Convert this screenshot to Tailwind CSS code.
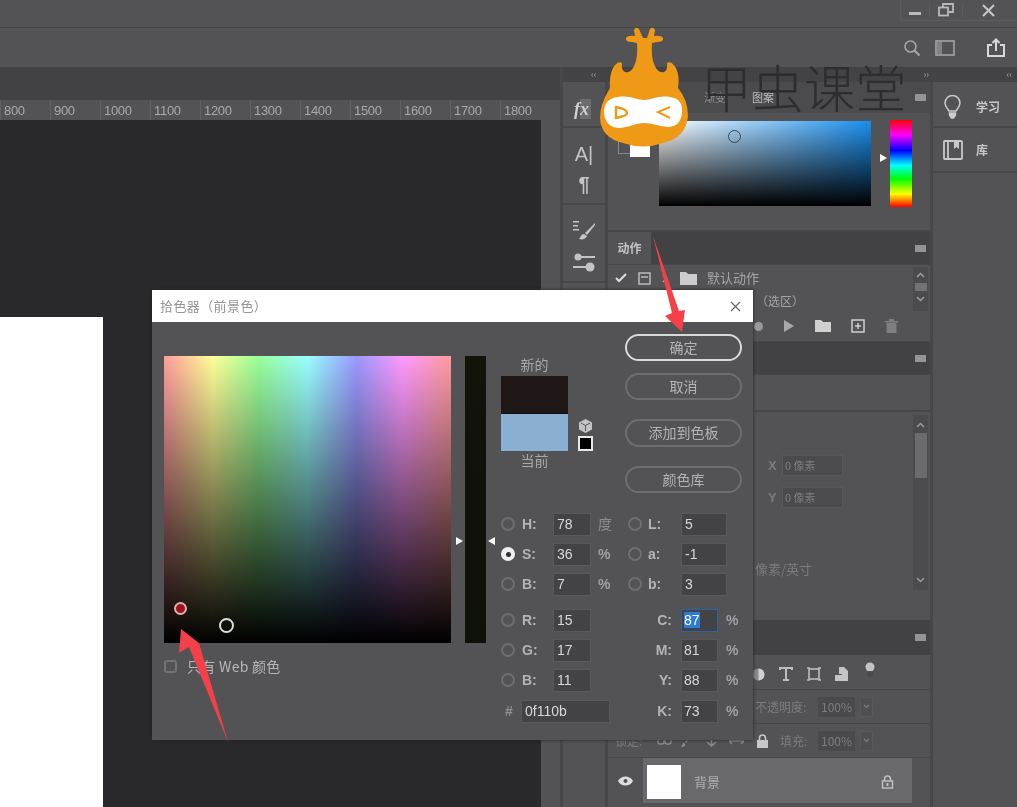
<!doctype html>
<html lang="zh">
<head>
<meta charset="UTF-8" />
<title>拾色器</title>
<script src="https://cdn.jsdelivr.net/npm/@tailwindcss/browser@4"></script>
</head>
<body class="m-0 bg-[#535254]">
<div class="relative w-[1017px] h-[807px] overflow-hidden bg-[#535254] flex flex-col blur-[0.4px] font-['Noto_Sans_CJK_SC','Liberation_Sans',sans-serif] text-[#b0b0b0]">

  <!-- title bar -->
  <header class="h-[28px] shrink-0 border-b border-[#474648] flex justify-end">
    <div class="w-[117px] h-[21px] border-l border-b border-[#5c5b5d] rounded-bl flex items-center text-[#b9b9b9]">
      <div class="w-[28px] flex justify-center"><div class="w-[12px] h-[3px] mt-[6px] bg-[#b9b9b9]"></div></div>
      <div class="w-[33px] flex justify-center border-l border-[#5c5b5d]">
        <svg width="16" height="14" viewBox="0 0 16 14" fill="none" stroke="#b9b9b9" stroke-width="1.8"><rect x="1" y="4.5" width="9" height="8"/><path d="M5 4V1h10v8h-4"/></svg>
      </div>
      <div class="flex-1 flex justify-center pr-[4px] border-l border-[#5c5b5d]">
        <svg width="13" height="13" viewBox="0 0 13 13" stroke="#c4c4c4" stroke-width="2.2"><path d="M1 1l11 11M12 1L1 12"/></svg>
      </div>
    </div>
  </header>

  <!-- options bar -->
  <div class="h-[39px] shrink-0 flex items-center justify-end pr-[11px] gap-[14px]">
    <svg width="18" height="18" viewBox="0 0 18 18" fill="none" stroke="#a5a5a5" stroke-width="1.6"><circle cx="7.5" cy="7.5" r="5.5"/><path d="M11.5 11.5l5 5" stroke-width="2.2"/></svg>
    <svg class="mr-[17px]" width="20" height="16" viewBox="0 0 20 16" fill="none" stroke="#a5a5a5" stroke-width="1.6"><rect x="1" y="1" width="18" height="14"/><rect x="2" y="2" width="5" height="12" fill="#a5a5a5" stroke="none" opacity=".6"/></svg>
    <svg width="20" height="20" viewBox="0 0 20 20" fill="none" stroke="#d8d8d8" stroke-width="2"><path d="M6 7H2v11h16V7h-4"/><path d="M10 13V2M6.5 5L10 1.5 13.5 5"/></svg>
  </div>

  <div class="flex-1 flex min-h-0">
    <!-- document area -->
    <main class="w-[560px] shrink-0 flex flex-col">
      <div class="h-[33px] shrink-0 bg-[#424143] border-t border-[#474648]"></div>
      <div class="h-[20px] shrink-0 flex w-[541px] font-['Liberation_Sans',sans-serif] text-[13px] leading-[22px] tracking-[-0.3px] text-[#a9a9a9]">
        <span class="w-[50px] pl-[3px] border-l border-[#626163]">800</span>
        <span class="w-[50px] pl-[3px] border-l border-[#626163]">900</span>
        <span class="w-[50px] pl-[3px] border-l border-[#626163]">1000</span>
        <span class="w-[50px] pl-[3px] border-l border-[#626163]">1100</span>
        <span class="w-[50px] pl-[3px] border-l border-[#626163]">1200</span>
        <span class="w-[50px] pl-[3px] border-l border-[#626163]">1300</span>
        <span class="w-[50px] pl-[3px] border-l border-[#626163]">1400</span>
        <span class="w-[50px] pl-[3px] border-l border-[#626163]">1500</span>
        <span class="w-[50px] pl-[3px] border-l border-[#626163]">1600</span>
        <span class="w-[50px] pl-[3px] border-l border-[#626163]">1700</span>
        <span class="w-[41px] pl-[3px] border-l border-[#626163]">1800</span>
      </div>
      <div class="flex-1 w-[541px] bg-[#29292b] pt-[197px]">
        <div class="w-[103px] h-full bg-white"></div>
      </div>
    </main>

    <!-- panel docks -->
    <div class="w-[373px] shrink-0 flex flex-col border-l-[3px] border-[#474648]">
      <div class="h-[15px] shrink-0 bg-[#434244] flex items-center justify-between px-[4px] pl-[28px] text-[9px] leading-none text-[#a5a5a5]">
        <span>‹‹</span><span>››</span>
      </div>
      <div class="flex-1 flex min-h-0">
        <!-- icon strip -->
        <div class="w-[45px] shrink-0 border-r-[3px] border-[#474648] flex flex-col items-center text-[#c4c4c4]">
          <div class="h-[46px] w-full border-b-2 border-[#474648] flex items-center pl-[11px] pt-[10px]">
            <span class="bg-[linear-gradient(to_right,transparent_35%,#6d6c6e_35%)] pr-[2px] font-['Liberation_Serif',serif] italic font-bold text-[18px] leading-[20px] text-[#d0d0d0]">fx</span>
          </div>
          <div class="h-[77px] w-full border-b-2 border-[#474648] flex flex-col items-center justify-center gap-[8px] pt-[6px]">
            <span class="font-['Liberation_Sans',sans-serif] text-[20px] leading-[22px]">A|</span>
            <span class="font-['Liberation_Sans',sans-serif] text-[20px] leading-[22px] font-bold">¶</span>
          </div>
          <div class="h-[78px] w-full border-b-2 border-[#474648] flex flex-col items-center justify-center gap-[11px] pt-[6px]">
            <svg width="24" height="22" viewBox="0 0 24 22" fill="#c4c4c4"><path d="M1 1h6v1.500H1zM1 5h5v1.500H1zM1 9h6v1.500H1z"/><path d="M23 3L13 13l2 2L23 5zM12 14c-3 0-3 3-5 5 3 1 7 0 8-3z"/></svg>
            <svg width="24" height="20" viewBox="0 0 24 20" fill="#c4c4c4"><circle cx="6" cy="4" r="3.500"/><path d="M8 3h15v2H8zM1 13h13v2H1z"/><circle cx="18" cy="14" r="4.500"/></svg>
          </div>
        </div>

        <!-- panels -->
        <div class="flex-1 flex flex-col border-r-[3px] border-[#474648]">
          <section class="h-[150px] shrink-0 flex flex-col border-b-2 border-[#474648]">
            <div class="h-[31px] shrink-0 bg-[#4b4a4c] flex items-center text-[11px] text-[#8d8d8d]">
              <span class="ml-[96px]">渐变</span>
              <span class="ml-[26px] text-[#bdbdbd]">图案</span>
              <span class="ml-auto mr-[4px] w-[11px] h-[7px] bg-[#949395]"></span>
            </div>
            <div class="flex-1 relative pl-[51px] pt-[8px] flex items-start">
              <div class="absolute left-[10px] top-[27px] w-[18px] h-[14px] border border-[#8a898b]"></div>
              <div class="absolute left-[22px] top-[30px] w-[20px] h-[14px] bg-white"></div>
              <div class="relative w-[212px] h-[85px] bg-[linear-gradient(to_bottom,transparent,#000),linear-gradient(to_right,#fff,#1a8fee)]">
                <div class="absolute left-[69px] top-[9px] w-[13px] h-[13px] rounded-full border border-[#3a4a5a]"></div>
              </div>
              <div class="w-0 h-0 mt-[33px] ml-[9px] border-y-[4px] border-y-transparent border-l-[7px] border-l-white"></div>
              <div class="w-[22px] h-[87px] ml-[3px] -mt-[1px] bg-[linear-gradient(to_bottom,#f00,#f0f_17%,#00f_35%,#0ff_52%,#0f0_68%,#ff0_85%,#f00)]"></div>
            </div>
          </section>

          <section class="h-[109px] shrink-0 flex flex-col">
            <div class="h-[33px] shrink-0 bg-[#424143] flex items-center border-b border-[#474648]">
              <span class="w-[43px] h-full bg-[#535254] flex items-center justify-center text-[12px] font-bold text-[#c4c4c4]">动作</span>
              <span class="ml-auto mr-[4px] w-[11px] h-[7px] bg-[#949395]"></span>
            </div>
            <div class="flex-1 relative">
              <div class="flex items-center h-[26px] pl-[7px] text-[13px] text-[#a5a5a5]">
                <svg width="12" height="10" viewBox="0 0 12 10" fill="none" stroke="#ddd" stroke-width="2"><path d="M1 5l3 3 7-7"/></svg>
                <svg class="ml-[11px]" width="13" height="13" viewBox="0 0 13 13" fill="none" stroke="#bbb" stroke-width="1.500"><rect x="1" y="1" width="11" height="11"/><path d="M3 5h7"/></svg>
                <svg class="ml-[11px]" width="6" height="9" viewBox="0 0 6 9" fill="none" stroke="#aaa" stroke-width="1.500"><path d="M1 1l3.500 3.500L1 8"/></svg>
                <svg class="ml-[12px]" width="17" height="13" viewBox="0 0 17 13" fill="#ccc"><path d="M0 0h6l2 2h9v11H0z"/></svg>
                <span class="ml-[10px]">默认动作</span>
              </div>
              <div class="h-[20px] pl-[148px] text-[12px] leading-[20px] text-[#a5a5a5]">（选区）</div>
              <div class="flex items-center h-[24px] mt-[3px] pl-[146px] gap-[20px]">
                <span class="w-[9px] h-[9px] rounded-full bg-[#9a9a9a]"></span>
                <svg width="12" height="12" viewBox="0 0 12 12" fill="#a8a8a8"><path d="M1 0l10 6-10 6z"/></svg>
                <svg width="16" height="12" viewBox="0 0 16 12" fill="#d0d0d0"><path d="M0 0h6l2 2h8v10H0z"/></svg>
                <svg width="14" height="14" viewBox="0 0 14 14" fill="none" stroke="#d0d0d0" stroke-width="1.500"><rect x="1" y="1" width="12" height="12"/><path d="M7 4v6M4 7h6"/></svg>
                <svg width="13" height="14" viewBox="0 0 13 14" fill="#7f7f7f"><path d="M0 2h13v1.500H0zM4 0h5v2H4zM1.500 4h10v10h-10z"/></svg>
              </div>
              <div class="absolute right-[2px] top-[2px] w-[15px] h-[44px] bg-[#4b4a4c] flex flex-col items-center text-[#a0a0a0]">
                <svg class="mt-[5px]" width="9" height="6" viewBox="0 0 9 6" fill="none" stroke="currentColor" stroke-width="1.500"><path d="M1 5l3.500-3.500L8 5"/></svg>
                <span class="w-[12px] h-[8px] bg-[#727173] mt-[5px]"></span>
                <svg class="mt-[5px]" width="9" height="6" viewBox="0 0 9 6" fill="none" stroke="currentColor" stroke-width="1.500"><path d="M1 1l3.500 3.500L8 1"/></svg>
              </div>
            </div>
          </section>

          <section class="flex-1 flex flex-col min-h-0">
            <div class="h-[34px] shrink-0 bg-[#424143] flex items-center justify-end border-y border-[#474648]">
              <span class="mr-[4px] w-[11px] h-[7px] bg-[#949395]"></span>
            </div>
            <div class="h-[37px] shrink-0 border-b-2 border-[#474648]"></div>
            <div class="h-[208px] shrink-0 relative text-[#7c7b7d]">
              <div class="flex items-center h-[21px] mt-[43px] pl-[160px] text-[13px] font-bold">
                <span class="w-[14px] font-['Liberation_Sans',sans-serif]">X</span>
                <span class="w-[61px] h-[21px] bg-[#4b4a4c] border border-[#59585a] pl-[2px] text-[11px] leading-[19px] font-normal">0 像素</span>
              </div>
              <div class="flex items-center h-[21px] mt-[11px] pl-[160px] text-[13px] font-bold">
                <span class="w-[14px] font-['Liberation_Sans',sans-serif]">Y</span>
                <span class="w-[61px] h-[21px] bg-[#4b4a4c] border border-[#59585a] pl-[2px] text-[11px] leading-[19px] font-normal">0 像素</span>
              </div>
              <div class="mt-[50px] pl-[147px] text-[13px] leading-[22px]">像素/英寸</div>
              <div class="absolute right-[2px] top-[3px] w-[15px] h-[175px] bg-[#4b4a4c] flex flex-col items-center text-[#9a9a9a]">
                <svg class="mt-[7px]" width="9" height="6" viewBox="0 0 9 6" fill="none" stroke="currentColor" stroke-width="1.500"><path d="M1 5l3.500-3.500L8 5"/></svg>
                <span class="w-[12px] h-[45px] mt-[5px] bg-[#6b6a6c]"></span>
                <svg class="mt-auto mb-[7px]" width="9" height="6" viewBox="0 0 9 6" fill="none" stroke="currentColor" stroke-width="1.500"><path d="M1 1l3.500 3.500L8 1"/></svg>
              </div>
            </div>
            <div class="h-[35px] shrink-0 bg-[#424143] flex items-center justify-end">
              <span class="mr-[4px] w-[11px] h-[7px] bg-[#949395]"></span>
            </div>
            <div class="h-[35px] shrink-0 border-b border-[#474648] flex items-center pl-[144px] pt-[4px] gap-[14px]">
              <svg width="13" height="13" viewBox="0 0 13 13"><circle cx="6.500" cy="6.500" r="6" fill="#8a8a8a"/><path d="M6.500.5a6 6 0 0 1 0 12z" fill="#d0d0d0"/></svg>
              <svg width="14" height="14" viewBox="0 0 14 14" fill="none" stroke="#bdbdbd" stroke-width="2"><path d="M1 3V1h12v2M7 1v12M4 13h6"/></svg>
              <svg width="14" height="14" viewBox="0 0 14 14" fill="none" stroke="#bdbdbd" stroke-width="1.600"><rect x="2" y="2" width="10" height="10"/><path d="M0 1h3M0 13h3M11 1h3M11 13h3"/></svg>
              <svg width="13" height="15" viewBox="0 0 13 15" fill="#c4c4c4"><path d="M4 0h5l4 4v10H7V7H4z"/><rect y="8" width="7" height="6"/></svg>
              <svg class="-mt-[9px] ml-[3px]" width="10" height="16" viewBox="0 0 10 16"><circle cx="5" cy="5" r="4.500" fill="#c4c4c4"/><circle cx="5" cy="12" r="3" fill="#4a494b"/></svg>
            </div>
            <div class="h-[34px] shrink-0 border-b border-[#474648] flex items-center pl-[147px] text-[12px] text-[#7c7b7d]">
              <span class="w-[63px]">不透明度:</span>
              <span class="w-[37px] h-[20px] bg-[#4a494b] text-center leading-[20px]">100%</span>
              <span class="flex items-center justify-center w-[13px] h-[20px] ml-[5px] bg-[#4f4e50] border border-[#59585a]">
                <svg width="7" height="5" viewBox="0 0 7 5" fill="none" stroke="#7c7b7d" stroke-width="1.200"><path d="M1 1l2.500 2.500L6 1"/></svg>
              </span>
            </div>
            <div class="h-[33px] shrink-0 flex items-center pl-[7px] text-[12px] text-[#7c7b7d]">
              <span class="w-[42px]">锁定:</span>
              <svg width="15" height="8" viewBox="0 0 15 8" fill="none" stroke="#8a8a8a" stroke-width="1.500"><rect x="1" y="1" width="6" height="6" rx="2"/><rect x="8" y="1" width="6" height="6" rx="2"/></svg>
              <svg class="ml-[8px]" width="12" height="12" viewBox="0 0 12 12" fill="#8a8a8a"><path d="M12 0L5 7l1 1zM4 8c-2 0-1 2-3 4 3 0 5-1 4-3z"/></svg>
              <svg class="ml-[12px]" width="15" height="12" viewBox="0 0 15 12" fill="none" stroke="#8a8a8a" stroke-width="1.500"><path d="M7.500 0v11M3 7l4.500 4L12 7"/></svg>
              <svg class="ml-[10px]" width="15" height="8" viewBox="0 0 15 8" fill="none" stroke="#8a8a8a" stroke-width="1.500"><path d="M0 4h15M3 1L0 4l3 3M12 1l3 3-3 3"/></svg>
              <svg class="ml-[12px]" width="13" height="14" viewBox="0 0 13 14"><path d="M3.500 6V4a3 3 0 0 1 6 0v2" fill="none" stroke="#c8c8c8" stroke-width="1.600"/><rect x="1" y="6" width="11" height="8" fill="#c8c8c8"/></svg>
              <span class="ml-[11px] w-[38px]">填充:</span>
              <span class="w-[37px] h-[20px] bg-[#4a494b] text-center leading-[20px]">100%</span>
              <span class="flex items-center justify-center w-[13px] h-[20px] ml-[5px] bg-[#4f4e50] border border-[#59585a]">
                <svg width="7" height="5" viewBox="0 0 7 5" fill="none" stroke="#7c7b7d" stroke-width="1.200"><path d="M1 1l2.500 2.500L6 1"/></svg>
              </span>
            </div>
            <div class="h-[46px] shrink-0 flex items-center border-t border-[#474648]">
              <div class="w-[35px] flex justify-center">
                <svg width="15" height="10" viewBox="0 0 15 10"><path d="M0 5c3-6 12-6 15 0-3 6-12 6-15 0z" fill="#ddd"/><circle cx="7.500" cy="5" r="2" fill="#535254"/></svg>
              </div>
              <div class="w-[269px] h-full bg-[#69686a] flex items-center pl-[4px] pt-[3px] text-[13px] text-[#b0b0b0]">
                <span class="w-[34px] h-[34px] bg-white"></span>
                <span class="ml-[13px]">背景</span>
                <svg class="ml-auto mr-[18px]" width="13" height="14" viewBox="0 0 13 14" fill="none" stroke="#c0c0c0" stroke-width="1.500"><path d="M3.500 6V4a3 3 0 0 1 6 0v2"/><rect x="1.500" y="6" width="10" height="7"/><rect x="5.500" y="8" width="2" height="3" fill="#c0c0c0" stroke="none"/></svg>
              </div>
            </div>
          </section>
        </div>
      </div>
    </div>

    <!-- far right dock -->
    <aside class="flex-1 flex flex-col">
      <div class="h-[15px] shrink-0 bg-[#434244] flex items-center justify-end pr-[5px] text-[9px] leading-none text-[#a5a5a5]">‹‹</div>
      <div class="h-[46px] border-b-2 border-[#474648] flex items-center pl-[11px] pt-[6px]">
        <svg width="17" height="24" viewBox="0 0 17 24" fill="none" stroke="#ccc" stroke-width="1.500"><path d="M5 16C3 13 1 11 1 8a7.500 7.500 0 0 1 15 0c0 3-2 5-4 8z"/><path d="M5.500 18h6v2l-2 3h-2l-2-3z" fill="#ccc"/></svg>
        <span class="ml-[15px] text-[12px] font-bold text-[#c8c8c8]">学习</span>
      </div>
      <div class="h-[45px] border-b-2 border-[#474648] flex items-center pl-[10px]">
        <svg width="20" height="20" viewBox="0 0 20 20" fill="none" stroke="#c8c8c8" stroke-width="1.800"><rect x="1" y="1" width="18" height="18" rx="1"/><path d="M5 1v18"/><path d="M11 1h5v8l-2.500-2L11 9z" fill="#c8c8c8" stroke="none"/></svg>
        <span class="ml-[13px] text-[12px] font-bold text-[#c8c8c8]">库</span>
      </div>
    </aside>
  </div>

  <!-- colour picker dialog -->
  <div class="absolute left-[152px] top-[290px] w-[601px] h-[450px] bg-[#535254] shadow-[0_0_3px_#222]">
    <div class="h-[32px] bg-white flex items-center justify-between pl-[8px] pr-[12px] text-[13px] tracking-[0.4px] text-[#949494]">
      <span>拾色器（前景色）</span>
      <svg width="11" height="11" viewBox="0 0 11 11" stroke="#666" stroke-width="1.200"><path d="M1 1l9 9M10 1l-9 9"/></svg>
    </div>
    <div class="flex pl-[12px] pt-[12px]">
      <div class="w-[287px] pt-[22px]">
        <div class="relative w-[287px] h-[287px] bg-[linear-gradient(to_bottom,transparent,#000),linear-gradient(to_right,#ff9c9c,#ffff99_17%,#99ff99_33%,#99ffff_50%,#9999ff_67%,#ff99ff_83%,#ff9c9c)]">
          <div class="absolute left-[10px] top-[246px] w-[13px] h-[13px] rounded-full bg-[#a01018] border-2 border-[#d8b0b0]"></div>
          <div class="absolute left-[55px] top-[262px] w-[15px] h-[15px] rounded-full border-2 border-[#dcdcdc]"></div>
        </div>
        <div class="flex items-center mt-[13px] text-[14px] leading-[20px] text-[#b8b8b8]">
          <span class="w-[13px] h-[13px] rounded-[3px] border-2 border-[#727173]"></span>
          <span class="ml-[10px] tracking-[0.3px]">只有 Web 颜色</span>
        </div>
      </div>
      <div class="relative w-[21px] h-[287px] mt-[22px] ml-[14px] bg-[linear-gradient(to_bottom,#12140a,#0e100a)]">
        <div class="absolute -left-[9px] top-[181px] w-0 h-0 border-y-[4px] border-y-transparent border-l-[7px] border-l-white"></div>
        <div class="absolute -right-[9px] top-[181px] w-0 h-0 border-y-[4px] border-y-transparent border-r-[7px] border-r-white"></div>
      </div>
      <div class="w-[241px] ml-[15px]">
        <div class="flex h-[175px]">
          <div class="w-[124px] pt-[22px] text-[14px] text-[#a8a8a8]">
            <div class="w-[67px] h-[20px] leading-[16px] text-center">新的</div>
            <div class="flex items-end">
              <div class="w-[67px]">
                <div class="h-[37px] bg-[#1f1715]"></div>
                <div class="h-[1px] bg-[#101010]"></div>
                <div class="h-[37px] bg-[#8bafd3]"></div>
              </div>
              <div class="ml-[10px] flex flex-col items-center gap-[3px]">
                <svg width="13" height="14" viewBox="0 0 13 14" fill="#c4c4c4"><path d="M6.500 0L13 3.500v7L6.500 14 0 10.500v-7z"/><path d="M2 4l4.500 2.500L11 4M6.500 6.500V12" fill="none" stroke="#535254"/></svg>
                <span class="w-[15px] h-[15px] bg-black border-2 border-[#e8e8e8]"></span>
              </div>
            </div>
            <div class="w-[67px] h-[20px] leading-[18px] text-center">当前</div>
          </div>
          <div class="w-[117px] flex flex-col text-[14px] text-[#b4b4b4]">
            <button class="h-[27px] pb-[2px] rounded-full border-2 border-[#d9d9d9] text-center leading-[20px]">确定</button>
            <button class="h-[27px] pb-[2px] mt-[12px] rounded-full border-2 border-[#6e6d6f] text-center leading-[20px]">取消</button>
            <button class="h-[28px] pb-[2px] mt-[19px] rounded-full border-2 border-[#6e6d6f] text-center leading-[21px]">添加到色板</button>
            <button class="h-[27px] pb-[2px] mt-[19px] rounded-full border-2 border-[#6e6d6f] text-center leading-[20px]">颜色库</button>
          </div>
        </div>

        <div class="font-['Liberation_Sans','Noto_Sans_CJK_SC',sans-serif] text-[14px] text-[#b4b4b4]">
          <div class="flex items-center h-[30px]">
            <span class="w-[14px] h-[14px] rounded-full border-2 border-[#6f6e70]"></span>
            <span class="ml-[7px] w-[31px] font-bold">H:</span>
            <span class="w-[38px] h-[23px] bg-[#434244] border border-[#59585a] pl-[3px] leading-[21px] text-[#d8d8d8]">78</span>
            <span class="ml-[7px] w-[30px] text-[#8e8e8e]">度</span>
            <span class="w-[14px] h-[14px] rounded-full border-2 border-[#6f6e70]"></span>
            <span class="ml-[6px] w-[33px] font-bold">L:</span>
            <span class="w-[46px] h-[23px] bg-[#434244] border border-[#59585a] pl-[3px] leading-[21px] text-[#d8d8d8]">5</span>
          </div>
          <div class="flex items-center h-[30px]">
            <span class="flex items-center justify-center w-[14px] h-[14px] rounded-full bg-[#efefef]"><span class="w-[5px] h-[5px] rounded-full bg-[#333]"></span></span>
            <span class="ml-[7px] w-[31px] font-bold">S:</span>
            <span class="w-[38px] h-[23px] bg-[#434244] border border-[#59585a] pl-[3px] leading-[21px] text-[#d8d8d8]">36</span>
            <span class="ml-[7px] w-[30px] font-bold text-[#a0a0a0]">%</span>
            <span class="w-[14px] h-[14px] rounded-full border-2 border-[#6f6e70]"></span>
            <span class="ml-[6px] w-[33px] font-bold">a:</span>
            <span class="w-[46px] h-[23px] bg-[#434244] border border-[#59585a] pl-[3px] leading-[21px] text-[#d8d8d8]">-1</span>
          </div>
          <div class="flex items-center h-[30px]">
            <span class="w-[14px] h-[14px] rounded-full border-2 border-[#6f6e70]"></span>
            <span class="ml-[7px] w-[31px] font-bold">B:</span>
            <span class="w-[38px] h-[23px] bg-[#434244] border border-[#59585a] pl-[3px] leading-[21px] text-[#d8d8d8]">7</span>
            <span class="ml-[7px] w-[30px] font-bold text-[#a0a0a0]">%</span>
            <span class="w-[14px] h-[14px] rounded-full border-2 border-[#6f6e70]"></span>
            <span class="ml-[6px] w-[33px] font-bold">b:</span>
            <span class="w-[46px] h-[23px] bg-[#434244] border border-[#59585a] pl-[3px] leading-[21px] text-[#d8d8d8]">3</span>
          </div>

          <div class="flex items-center h-[30px] mt-[6px]">
            <div class="w-[145px] flex items-center">
              <span class="w-[14px] h-[14px] rounded-full border-2 border-[#6f6e70]"></span>
              <span class="ml-[7px] w-[31px] font-bold">R:</span>
              <span class="w-[38px] h-[23px] bg-[#434244] border border-[#59585a] pl-[3px] leading-[21px] text-[#d8d8d8]">15</span>
            </div>
            <span class="w-[26px] text-right font-bold">C:</span>
            <span class="ml-[9px] w-[37px] h-[23px] bg-[#434244] border border-[#2d62a8] pl-[2px] leading-[21px] text-white"><span class="bg-[#2e7bd6]">87</span></span>
            <span class="ml-[8px] font-bold text-[#a0a0a0]">%</span>
          </div>
          <div class="flex items-center h-[30px]">
            <div class="w-[145px] flex items-center">
              <span class="w-[14px] h-[14px] rounded-full border-2 border-[#6f6e70]"></span>
              <span class="ml-[7px] w-[31px] font-bold">G:</span>
              <span class="w-[38px] h-[23px] bg-[#434244] border border-[#59585a] pl-[3px] leading-[21px] text-[#d8d8d8]">17</span>
            </div>
            <span class="w-[26px] text-right font-bold">M:</span>
            <span class="ml-[9px] w-[37px] h-[23px] bg-[#434244] border border-[#59585a] pl-[2px] leading-[21px] text-[#d8d8d8]">81</span>
            <span class="ml-[8px] font-bold text-[#a0a0a0]">%</span>
          </div>
          <div class="flex items-center h-[30px]">
            <div class="w-[145px] flex items-center">
              <span class="w-[14px] h-[14px] rounded-full border-2 border-[#6f6e70]"></span>
              <span class="ml-[7px] w-[31px] font-bold">B:</span>
              <span class="w-[38px] h-[23px] bg-[#434244] border border-[#59585a] pl-[3px] leading-[21px] text-[#d8d8d8]">11</span>
            </div>
            <span class="w-[26px] text-right font-bold">Y:</span>
            <span class="ml-[9px] w-[37px] h-[23px] bg-[#434244] border border-[#59585a] pl-[2px] leading-[21px] text-[#d8d8d8]">88</span>
            <span class="ml-[8px] font-bold text-[#a0a0a0]">%</span>
          </div>
          <div class="flex items-center h-[30px] mt-[1px]">
            <div class="w-[145px] flex items-center">
              <span class="w-[20px] pl-[4px] font-bold text-[#8e8e8e]">#</span>
              <span class="w-[89px] h-[23px] bg-[#434244] border border-[#59585a] pl-[3px] leading-[21px] text-[#d8d8d8]">0f110b</span>
            </div>
            <span class="w-[26px] text-right font-bold">K:</span>
            <span class="ml-[9px] w-[37px] h-[23px] bg-[#434244] border border-[#59585a] pl-[2px] leading-[21px] text-[#d8d8d8]">73</span>
            <span class="ml-[8px] font-bold text-[#a0a0a0]">%</span>
          </div>
        </div>
      </div>
    </div>
  </div>

  <!-- red annotation arrows -->
  <svg class="absolute left-0 top-0 pointer-events-none" width="1017" height="807" viewBox="0 0 1017 807" fill="#f5404a">
    <path d="M181 629L179 653L189 647L228 742L199 643Z"/>
    <path d="M653 236L679 311L685 310L682 332L665 316L672 313Z"/>
  </svg>

  <!-- watermark -->
  <svg class="absolute left-[598px] top-[26px]" width="92" height="124" viewBox="0 0 92 124">
    <path fill="#ee9a17" d="M45 12L41 3Q38 0 36 4L37 10Q30 9 28 12Q27 16 34 16L39 17Q40 30 37 38Q33 48 27 46Q23 44 24 37Q20 34 15 42Q11 50 12 62Q2 78 2 92Q3 112 25 117Q45 124 65 117Q88 112 90 90Q90 74 80 62Q82 50 78 42Q73 34 69 37Q70 44 66 46Q60 48 56 38Q53 30 54 17L59 16Q66 16 65 12Q63 9 56 10L57 4Q55 0 52 3L49 12Z"/>
    <path fill="#fff" d="M20 71C32 69 38 74 46 74C54 74 60 69 72 71C82 72 85 79 84 87C83 96 78 101 70 101C60 100 54 97 46 97C38 97 32 101 22 102C12 102 7 96 6 87C6 78 10 72 20 71Z"/>
    <path fill="none" stroke="#ee9a17" stroke-width="2.500" stroke-linejoin="round" d="M18 81Q29 83 29 87Q29 90 18 92Z"/>
    <path fill="none" stroke="#ee9a17" stroke-width="2" d="M72 81L60 86L72 92"/>
  </svg>
  <span class="absolute left-[701px] top-[50px] text-[51px] leading-[72px] tracking-[0.5px] font-light text-[#2d2c2e]">甲虫课堂</span>
</div>
</body>
</html>
